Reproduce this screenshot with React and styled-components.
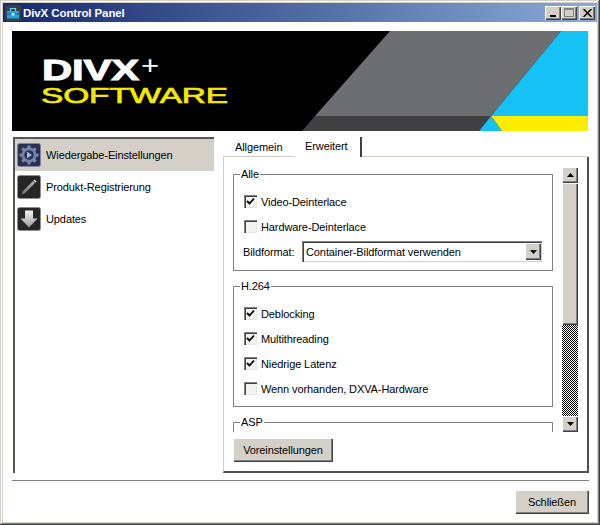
import styled, { createGlobalStyle } from "styled-components";
import { useState } from "react";

const Global = createGlobalStyle`
    html, body { margin: 0; padding: 0; background: #fff; }
    * { box-sizing: border-box; }
`;

const uiFont = `"Liberation Sans", Arial, sans-serif`;

const sections = [
    { label: "Wiedergabe-Einstellungen", icon: "gear" },
    { label: "Produkt-Registrierung", icon: "pencil" },
    { label: "Updates", icon: "down" },
];

function NavIcon({ kind }) {
    const bg = kind === "gear" ? "#2a3150" : "#262626";
    return (
        <svg width="24" height="24" viewBox="0 0 24 24">
            <defs>
                <linearGradient id="arrowFill" x1="0" y1="0" x2="0" y2="1">
                    <stop offset="0" stopColor="#f4f4f4" />
                    <stop offset="1" stopColor="#9a9a9a" />
                </linearGradient>
                <linearGradient id="pencilFill" x1="0" y1="1" x2="1" y2="0">
                    <stop offset="0" stopColor="#6a6a6a" />
                    <stop offset="1" stopColor="#b8b8b8" />
                </linearGradient>
            </defs>
            <rect x="0.5" y="0.5" width="23" height="23" rx="2" fill={bg} stroke={kind === "gear" ? "#7e86a2" : "#8c8c8c"} />
            {kind === "gear" && (
                <>
                    <circle cx="12" cy="12" r="7.500" fill="#7585ad" />
                    <g stroke="#7585ad" strokeWidth="3.200">
                        <path d="M12 2.500v19M2.500 12h19M5.300 5.300l13.400 13.400M18.700 5.300L5.300 18.700" />
                    </g>
                    <circle cx="12" cy="12" r="4.800" fill="#2a3150" />
                    <path d="M10 8.500l5 3.500-5 3.500z" fill="#a9b6d8" />
                </>
            )}
            {kind === "pencil" && (
                <>
                    <path d="M5.500 16.500L16 6l2 2L7.500 18.500 4.500 19.500z" fill="url(#pencilFill)" />
                    <path d="M16.500 5.500l1-1 2 2-1 1z" fill="#fff" />
                </>
            )}
            {kind === "down" && <path d="M8 3.500h8v8h4.500L12 20.500 3.500 11.500H8z" fill="url(#arrowFill)" />}
        </svg>
    );
}

function Banner() {
    return (
        <BannerBox>
            <svg width="576" height="100" viewBox="0 0 576 100">
                <rect width="576" height="100" fill="#000" />
                <polygon points="378,0 549,0 479,85 303,85" fill="#6d6e71" />
                <polygon points="303,85 479,85 467,100 290,100" fill="#414042" />
                <polygon points="549,0 576,0 576,85 479,85" fill="#15c1f5" />
                <polygon points="479,85 467,100 490,100" fill="#15c1f5" />
                <polygon points="479,85 576,85 576,100 490,100" fill="#ffed00" />
                <text x="30" y="49" fontFamily="Liberation Sans" fontWeight="700" fontSize="29" fill="#fff" stroke="#fff" strokeWidth="1" textLength="97" lengthAdjust="spacingAndGlyphs">DIVX</text>
                <text x="129" y="43" fontFamily="Liberation Sans" fontSize="26" fill="#fff" textLength="18" lengthAdjust="spacingAndGlyphs">+</text>
                <text x="29" y="72" fontFamily="Liberation Sans" fontSize="22" fill="#f5e800" stroke="#f5e800" strokeWidth="0.700" textLength="187" lengthAdjust="spacingAndGlyphs">SOFTWARE</text>
            </svg>
        </BannerBox>
    );
}

function Check({ label, on }) {
    return (
        <CheckRow>
            <CheckBox>
                {on && (
                    <svg width="9" height="9" viewBox="0 0 9 9">
                        <path d="M1 4l2.500 2.500L8 1.500" fill="none" stroke="#000" strokeWidth="1.800" />
                    </svg>
                )}
            </CheckBox>
            {label}
        </CheckRow>
    );
}

export default function App() {
    const [active, setActive] = useState(0);
    const [tab, setTab] = useState(1);

    return (
        <Window>
            <Global />
            <TitleBar>
                <TitleIcon>
                    <svg width="16" height="16" viewBox="0 0 16 16">
                        <rect width="16" height="16" rx="2" fill="#3a3f45" />
                        <path d="M2 6h12v7.500H2z" fill="#22a5d8" />
                        <path d="M5.500 6V3.500h5V6" fill="none" stroke="#6fd0f2" strokeWidth="1.200" />
                        <path d="M2 9h12" stroke="#0c5f86" />
                        <rect x="6.500" y="8" width="3" height="2.500" fill="#bfeafa" />
                    </svg>
                </TitleIcon>
                <TitleText>DivX Control Panel</TitleText>
                <CaptionButton>
                    <svg width="8" height="8" viewBox="0 0 8 8"><rect x="1" y="6" width="6" height="2" fill="#000" /></svg>
                </CaptionButton>
                <CaptionButton>
                    <svg width="10" height="9" viewBox="0 0 10 9"><path d="M.5 1.500h9v7h-9z" fill="none" stroke="#808080" /><path d="M0 .5h10" stroke="#808080" /></svg>
                </CaptionButton>
                <CloseButton>
                    <svg width="9" height="8" viewBox="0 0 9 8"><path d="M.5 0l8 8M8.500 0l-8 8" stroke="#000" strokeWidth="1.500" /></svg>
                </CloseButton>
            </TitleBar>
            <Client>
                <Banner />
                <Middle>
                    <Sidebar>
                        {sections.map((s, i) => (
                            <NavItem key={s.label} $active={i === active} onClick={() => setActive(i)}>
                                <NavIcon kind={s.icon} />
                                {s.label}
                            </NavItem>
                        ))}
                    </Sidebar>
                    <Right>
                        <Tabs>
                            <Tab $active={tab === 0} onClick={() => setTab(0)}>Allgemein</Tab>
                            <Tab $active={tab === 1} onClick={() => setTab(1)}>Erweitert</Tab>
                            <TabRest />
                        </Tabs>
                        <Panel>
                            <ScrollRow>
                                <Scroller>
                                    <Group>
                                        <legend>Alle</legend>
                                        <Check label="Video-Deinterlace" on />
                                        <Check label="Hardware-Deinterlace" />
                                        <FormatRow>
                                            <FormatLabel>Bildformat:</FormatLabel>
                                            <Combo>
                                                <ComboText>Container-Bildformat verwenden</ComboText>
                                                <ComboArrow>
                                                    <svg width="7" height="4" viewBox="0 0 7 4"><path d="M0 0h7L3.500 4z" fill="#000" /></svg>
                                                </ComboArrow>
                                            </Combo>
                                        </FormatRow>
                                    </Group>
                                    <TallGroup>
                                        <legend>H.264</legend>
                                        <Check label="Deblocking" on />
                                        <Check label="Multithreading" on />
                                        <Check label="Niedrige Latenz" on />
                                        <Check label="Wenn vorhanden, DXVA-Hardware" />
                                    </TallGroup>
                                    <TallGroup>
                                        <legend>ASP</legend>
                                    </TallGroup>
                                </Scroller>
                                <ScrollBar>
                                    <ScrollButton>
                                        <svg width="7" height="4" viewBox="0 0 7 4"><path d="M3.500 0L7 4H0z" fill="#000" /></svg>
                                    </ScrollButton>
                                    <Thumb />
                                    <Track />
                                    <ScrollButton>
                                        <svg width="7" height="4" viewBox="0 0 7 4"><path d="M0 0h7L3.500 4z" fill="#000" /></svg>
                                    </ScrollButton>
                                </ScrollBar>
                            </ScrollRow>
                            <PanelFooter>
                                <PushButton $width={100}>Voreinstellungen</PushButton>
                            </PanelFooter>
                        </Panel>
                    </Right>
                </Middle>
                <Separator />
                <Footer>
                    <PushButton $width={74}>Schließen</PushButton>
                </Footer>
            </Client>
        </Window>
    );
}

const Window = styled.div`
    width: 600px;
    height: 525px;
    display: flex;
    flex-direction: column;
    background: #fff;
    padding: 3px;
    font-family: ${uiFont};
    font-size: 11px;
    letter-spacing: -0.100px;
    color: #000;
    box-shadow: inset -1px -1px 0 #404040, inset 1px 1px 0 #d4d0c8, inset -2px -2px 0 #808080, inset 2px 2px 0 #fff, inset -3px -3px 0 #d4d0c8, inset 3px 3px 0 #d4d0c8;
`;

const TitleBar = styled.div`
    height: 19px;
    display: flex;
    align-items: center;
    padding: 0 2px;
    background: linear-gradient(90deg, #16296e, #8aaad8);
    flex-shrink: 0;
`;

const TitleIcon = styled.div`
    width: 16px;
    height: 16px;
    display: flex;
    margin-right: 2px;
`;

const TitleText = styled.div`
    flex: 1;
    color: #fff;
    font-weight: 700;
    font-size: 11.500px;
`;

const CaptionButton = styled.div`
    width: 16px;
    height: 14px;
    display: flex;
    align-items: center;
    justify-content: center;
    background: #d4d0c8;
    box-shadow: inset 1px 1px 0 #fff, inset -1px -1px 0 #404040, inset -2px -2px 0 #808080;
`;

const CloseButton = styled(CaptionButton)`
    margin-left: 2px;
`;

const Client = styled.div`
    flex: 1;
    display: flex;
    flex-direction: column;
    padding: 9px 8px 9px 9px;
    min-height: 0;
`;

const BannerBox = styled.div`
    height: 100px;
    width: 576px;
    flex-shrink: 0;
    svg { display: block; }
`;

const Middle = styled.div`
    display: flex;
    margin-top: 6px;
    height: 336px;
    flex-shrink: 0;
`;

const Sidebar = styled.div`
    width: 201px;
    margin-left: 1px;
    border-top: 2px solid #555;
    border-left: 2px solid #555;
    margin-right: 9px;
`;

const NavItem = styled.div`
    height: 32px;
    display: flex;
    align-items: center;
    gap: 5px;
    padding-left: 2px;
    cursor: default;
    background: ${(p) => (p.$active ? "#d4d0c8" : "transparent")};
    svg { flex-shrink: 0; }
`;

const Right = styled.div`
    flex: 1;
    min-width: 0;
    display: flex;
    flex-direction: column;
`;

const Tabs = styled.div`
    height: 20px;
    display: flex;
    flex-shrink: 0;
`;

const Tab = styled.div`
    height: 20px;
    width: ${(p) => (p.$active ? "67px" : "72px")};
    padding: ${(p) => (p.$active ? "3px 0 0 10px" : "4px 0 0 12px")};
    cursor: default;
    border-bottom: ${(p) => (p.$active ? "none" : "1px solid #d4d0c8")};
    border-right: ${(p) => (p.$active ? "2px solid #404040" : "none")};
`;

const TabRest = styled.div`
    flex: 1;
    border-bottom: 1px solid #d4d0c8;
`;

const Panel = styled.div`
    flex: 1;
    min-height: 0;
    display: flex;
    flex-direction: column;
    border-left: 1px solid #d4d0c8;
    border-right: 2px solid #505050;
    border-bottom: 2px solid #505050;
    padding: 10px 9px 9px 9px;
`;

const ScrollRow = styled.div`
    display: flex;
    height: 265px;
    flex-shrink: 0;
`;

const Scroller = styled.div`
    width: 321px;
    overflow: hidden;
    margin-right: 9px;
    padding-top: 1px;
`;

const Group = styled.fieldset`
    margin: 0;
    padding: 8px 0 8px 10px;
    border: 1px solid #808080;
    legend {
        margin-left: -4px;
        padding: 0 1px;
        line-height: 13px;
    }
`;

const TallGroup = styled(Group)`
    margin-top: 9px;
    padding-bottom: 5px;
`;

const CheckRow = styled.div`
    height: 25px;
    display: flex;
    align-items: center;
    gap: 4px;
`;

const CheckBox = styled.span`
    width: 13px;
    height: 13px;
    display: flex;
    align-items: center;
    justify-content: center;
    background: #f4f3f0;
    box-shadow: inset 1px 1px 0 #808080, inset 2px 2px 0 #404040, inset -1px -1px 0 #e8e6e1;
`;

const FormatRow = styled.div`
    display: flex;
    align-items: center;
    margin-top: 2px;
`;

const FormatLabel = styled.div`
    width: 59px;
    flex-shrink: 0;
    margin-left: -1px;
`;

const Combo = styled.div`
    width: 240px;
    height: 21px;
    display: flex;
    align-items: center;
    padding: 2px 1px 2px 2px;
    box-shadow: inset 1px 1px 0 #808080, inset 2px 2px 0 #404040, inset -1px -1px 0 #d4d0c8;
`;

const ComboText = styled.div`
    flex: 1;
    padding-left: 2px;
`;

const ComboArrow = styled.div`
    width: 16px;
    height: 17px;
    display: flex;
    align-items: center;
    justify-content: center;
    background: #d4d0c8;
    box-shadow: inset 1px 1px 0 #fff, inset -1px -1px 0 #404040, inset -2px -2px 0 #808080;
`;

const ScrollBar = styled.div`
    width: 16px;
    display: flex;
    flex-direction: column;
    flex-shrink: 0;
`;

const ScrollButton = styled.div`
    height: 16px;
    display: flex;
    align-items: center;
    justify-content: center;
    background: #d4d0c8;
    box-shadow: inset 1px 1px 0 #fff, inset -1px -1px 0 #404040, inset -2px -2px 0 #808080;
`;

const Thumb = styled(ScrollButton)`
    height: 142px;
`;

const Track = styled.div`
    flex: 1;
    background: repeating-conic-gradient(#000 0 25%, #fff 0 50%) 0 0 / 2px 2px;
`;

const PanelFooter = styled.div`
    margin-top: 6px;
`;

const PushButton = styled.div`
    width: ${(p) => p.$width}px;
    height: 24px;
    display: flex;
    align-items: center;
    justify-content: center;
    background: #d4d0c8;
    box-shadow: inset 1px 1px 0 #fff, inset -1px -1px 0 #404040, inset -2px -2px 0 #808080;
`;

const Separator = styled.div`
    height: 1px;
    margin-top: 7px;
    background: #808080;
    flex-shrink: 0;
`;

const Footer = styled.div`
    display: flex;
    justify-content: flex-end;
    margin-top: 9px;
`;
